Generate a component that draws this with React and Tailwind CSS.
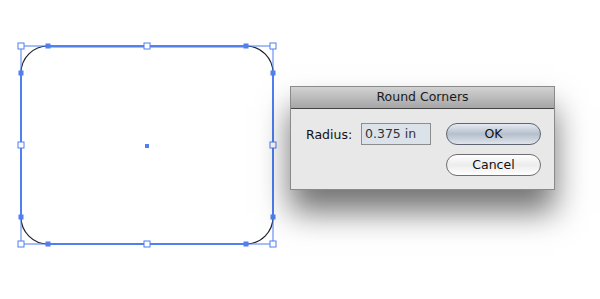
import React from "react";

const BLUE = "#4f7ff0";

function Shape() {
  const hollow = [
    [21, 46], [147, 46], [273, 46],
    [21, 145], [273, 145],
    [21, 244], [147, 244], [273, 244],
  ];
  const anchors = [
    [48, 46], [246, 46], [21, 73], [273, 73],
    [21, 217], [273, 217], [48, 244], [246, 244],
  ];
  return (
    <svg width="290" height="299" viewBox="0 0 290 299" className="shrink-0">
      <path
        d="M48 46 H246 A27 27 0 0 1 273 73 V217 A27 27 0 0 1 246 244 H48 A27 27 0 0 1 21 217 V73 A27 27 0 0 1 48 46 Z"
        fill="none"
        stroke="#1c2233"
        strokeWidth="1.2"
      />
      <rect x="21" y="46" width="252" height="198" fill="none" stroke={BLUE} strokeWidth="1" />
      <line x1="48" y1="46.5" x2="246" y2="46.5" stroke={BLUE} strokeWidth="2" />
      <line x1="48" y1="244" x2="246" y2="244" stroke={BLUE} strokeWidth="2" />
      <line x1="21" y1="73" x2="21" y2="217" stroke={BLUE} strokeWidth="2" />
      <line x1="273" y1="73" x2="273" y2="217" stroke={BLUE} strokeWidth="2" />
      {hollow.map(([x, y], i) => (
        <rect key={i} x={x - 3} y={y - 3} width="6" height="6" fill="#fff" stroke={BLUE} strokeWidth="1" />
      ))}
      {anchors.map(([x, y], i) => (
        <rect key={i} x={x - 2.5} y={y - 2.5} width="5" height="5" fill={BLUE} />
      ))}
      <rect x="145" y="144" width="4" height="4" fill={BLUE} />
    </svg>
  );
}

export default function App() {
  return (
    <div
      className="flex w-[600px] h-[299px] bg-white overflow-hidden"
      style={{ fontFamily: '"DejaVu Sans", "Liberation Sans", sans-serif' }}
    >
      <Shape />
      <div className="mt-[86px] w-[265px] h-[104px] flex flex-col bg-[#e8e8e8] border border-[#8a8a8a] shadow-[0_22px_30px_rgba(0,0,0,0.55)]">
        <div className="h-[22px] flex items-center justify-center bg-gradient-to-b from-[#d2d2d2] to-[#a6a6a6] border-b border-[#444] text-[12.5px] text-[#1a1a1a]">
          Round Corners
        </div>
        <div className="flex pl-[15px] pt-[14px]">
          <div className="flex items-start">
            <span className="w-[47px] text-[12.5px] text-[#111] mt-[3px]">Radius:</span>
            <div className="ml-[8px] w-[70px] h-[22px] bg-[#dbe2ea] border border-[#8d8d8d] text-[12.5px] text-[#333] pl-[3px] leading-[20px]">
              0.375 in
            </div>
          </div>
          <div className="ml-[15px] flex flex-col gap-[9px]">
            <div className="w-[95px] h-[22px] rounded-full border border-[#5e6470] bg-gradient-to-b from-[#e6ebf2] via-[#b5bfcc] to-[#dfe5ec] flex items-center justify-center text-[12.5px] text-[#111]">
              OK
            </div>
            <div className="w-[95px] h-[22px] rounded-full border border-[#6f6f6f] bg-gradient-to-b from-[#ffffff] via-[#ececec] to-[#ffffff] flex items-center justify-center text-[12.5px] text-[#111]">
              Cancel
            </div>
          </div>
        </div>
      </div>
    </div>
  );
}
